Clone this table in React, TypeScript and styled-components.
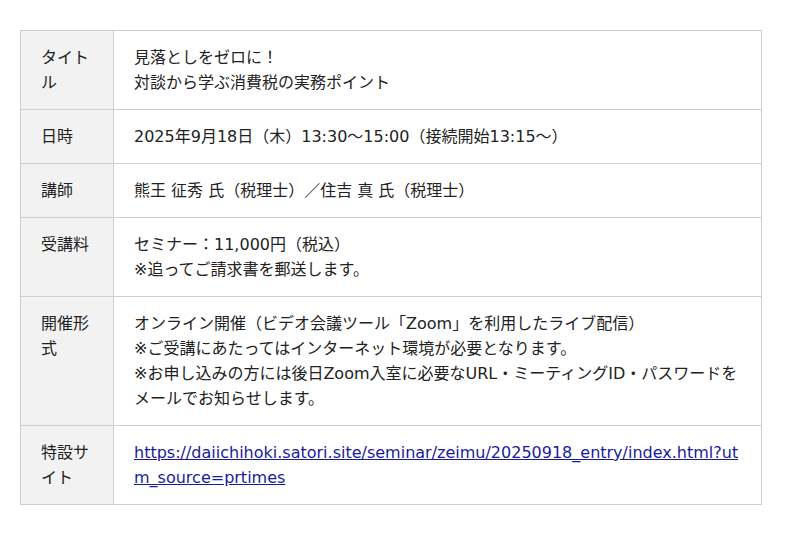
import React, { FC } from "react";
import styled, { createGlobalStyle } from "styled-components";

type Row = { label: string; lines: string[]; href?: string };

const rows: Row[] = [
  { label: "タイトル", lines: ["見落としをゼロに！", "対談から学ぶ消費税の実務ポイント"] },
  { label: "日時", lines: ["2025年9月18日（木）13:30～15:00（接続開始13:15～）"] },
  { label: "講師", lines: ["熊王 征秀 氏（税理士）／住吉 真 氏（税理士）"] },
  { label: "受講料", lines: ["セミナー：11,000円（税込）", "※追ってご請求書を郵送します。"] },
  {
    label: "開催形式",
    lines: [
      "オンライン開催（ビデオ会議ツール「Zoom」を利用したライブ配信）",
      "※ご受講にあたってはインターネット環境が必要となります。",
      "※お申し込みの方には後日Zoom入室に必要なURL・ミーティングID・パスワードをメールでお知らせします。",
    ],
  },
  {
    label: "特設サイト",
    lines: [],
    href: "https://daiichihoki.satori.site/seminar/zeimu/20250918_entry/index.html?utm_source=prtimes",
  },
];

const App: FC = () => (
  <>
    <GlobalStyle />
    <Page>
      <Table>
        <tbody>
          {rows.map((r) => (
            <tr key={r.label}>
              <Label>{r.label}</Label>
              <Cell>
                {r.href ? (
                  <Link href={r.href}>{r.href}</Link>
                ) : (
                  r.lines.map((l, i) => <Line key={i}>{l}</Line>)
                )}
              </Cell>
            </tr>
          ))}
        </tbody>
      </Table>
    </Page>
  </>
);

export default App;

const GlobalStyle = createGlobalStyle`
  body {
    margin: 0;
    background: #fff;
    font-family: "DejaVu Sans", "Noto Sans CJK JP", sans-serif;
    color: #222;
  }
`;

const Page = styled.div`
  padding: 30px 20px;
`;

const Table = styled.table`
  width: 742px;
  border-collapse: collapse;
  table-layout: fixed;
  font-size: 16px;
  line-height: 25px;
`;

const Label = styled.th`
  width: 52px;
  padding: 14px 20px;
  background: #f2f2f2;
  border: 1px solid #cfcfcf;
  font-weight: normal;
  text-align: left;
  vertical-align: top;
  word-break: break-all;
`;

const Cell = styled.td`
  padding: 14px 20px;
  border: 1px solid #cfcfcf;
  vertical-align: top;
`;

const Line = styled.div``;

const Link = styled.a`
  color: #1a1aa0;
  word-break: break-all;
`;
